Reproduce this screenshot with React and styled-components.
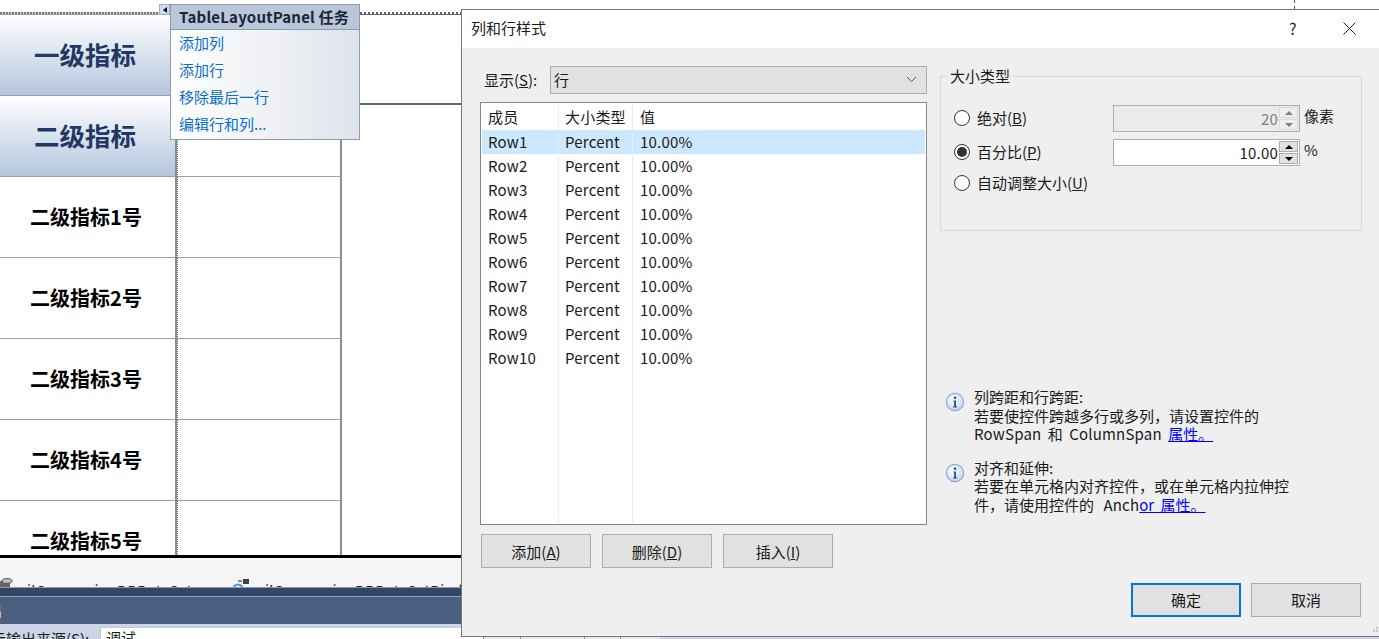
import React from "react";
import styled, { createGlobalStyle } from "styled-components";

const FONT = '"Noto Sans CJK SC", "Noto Sans", sans-serif';

const GlobalStyle = createGlobalStyle`
  html, body {
    margin: 0;
    width: 1379px;
    height: 639px;
    overflow: hidden;
    background: #fff;
  }
  * { box-sizing: border-box; }
`;

const Page = styled.div`
  position: relative;
  width: 1379px;
  height: 639px;
  overflow: hidden;
  font-family: ${FONT};
  font-size: 15px;
  color: #1a1a1a;
`;

/* ---------- designer surface behind the dialog ---------- */

const Designer = styled.div`
  height: 555px;
  display: flex;
  overflow: hidden;
`;

const MainTable = styled.div`
  width: 342px;
  flex: none;
  padding-top: 12px;
`;

const DottedEdge = styled.div`
  height: 2px;
  background: repeating-linear-gradient(90deg, #777 0 2px, #ddd 2px 3px);
`;

const TableGrid = styled.div`
  display: grid;
  grid-template-columns: 177px 165px;
  grid-auto-rows: 81px;
  border-top: 1px solid #a0a0a0;
`;

const LabelCell = styled.div`
  display: flex;
  align-items: center;
  justify-content: center;
  padding: 0 ${(p) => (p.$head ? "5px 3px 0" : "3px 1px 0")};
  border-right: 2px solid #8c8c8c;
  border-bottom: 1px solid #a0a0a0;
  font-weight: 700;
  color: ${(p) => (p.$head ? "#1f3864" : "#000")};
  font-size: ${(p) => (p.$head ? "25.5px" : "20px")};
  background: ${(p) =>
    p.$head ? "linear-gradient(180deg, #ffffff 0%, #b4c6de 100%)" : "#fff"};
`;

const BlankCell = styled.div`
  border-left: 1px dotted #666;
  border-right: 2px solid #8c8c8c;
  border-bottom: 1px solid #a0a0a0;
`;

const SideColumn = styled.div`
  flex: 1;
  padding-top: 12px;
`;

const SideEdge = styled.div`
  height: 2px;
  background: repeating-linear-gradient(90deg, #fff 0 2px, #666 2px 4px);
`;

const SideCell = styled.div`
  height: 91px;
  border-top: 1px solid #666;
  border-bottom: 2px solid #666;
`;

const FrameTick = styled.div`
  position: absolute;
  left: 1294px;
  top: 0;
  height: 9px;
  border-left: 1px dashed #555;
`;

const BlackRule = styled.div`
  height: 3px;
  background: #000;
`;

const Tray = styled.div`
  height: 29px;
  background: #f5f5f5;
  display: flex;
  overflow: hidden;
  padding-top: 23px;
`;

const TrayItem = styled.div`
  display: flex;
  align-items: flex-start;
  width: ${(p) => p.$width}px;
  flex: none;
  line-height: 20px;
  white-space: nowrap;
  color: #222;
  svg {
    flex: none;
    margin-top: -3px;
    margin-right: ${(p) => p.$gap}px;
  }
`;

const DockStripe = styled.div`
  height: 9px;
  background: #344666;
  border-top: 1px solid #8c9ab0;
`;

const DockTitle = styled.div`
  height: 28px;
  background: #4d5f80;
  border-top: 1px solid #8fa0c0;
  color: #fff;
  line-height: 26px;
  overflow: hidden;
  span {
    margin-left: -28px;
    display: inline-block;
  }
`;

const OutputBar = styled.div`
  height: 15px;
  background: #ccd5e6;
  padding-top: 3px;
  display: flex;
  overflow: hidden;
`;

const OutputLabel = styled.div`
  width: 100px;
  flex: none;
  white-space: nowrap;
  line-height: 20px;
  margin-top: 2px;
  span {
    margin-left: -24px;
    display: inline-block;
  }
`;

const OutputInput = styled.div`
  width: 383px;
  flex: none;
  background: #fff;
  border-top: 1px solid #c0cadc;
  border-left: 1px solid #c0cadc;
  padding-left: 5px;
  line-height: 20px;
`;

const ToolButton = styled.div`
  width: ${(p) => p.$width}px;
  flex: none;
  border-left: 1px solid #8a8a8a;
  background: #e6e9f0;
`;

/* ---------- smart tag popup ---------- */

const TagGlyph = styled.div`
  position: absolute;
  left: 159px;
  top: 4px;
  width: 11px;
  height: 11px;
  background: #cfdae8;
  border: 1px solid #9fb0c4;
  display: flex;
  align-items: center;
  justify-content: center;
  &::before {
    content: "";
    border-style: solid;
    border-width: 3.5px 4px 3.5px 0;
    border-color: transparent #111 transparent transparent;
  }
`;

const TagPanel = styled.div`
  position: absolute;
  left: 170px;
  top: 4px;
  width: 190px;
  height: 136px;
  border: 1px solid #8f9bad;
  background: linear-gradient(90deg, #ffffff 0%, #dfe3ea 100%);
`;

const TagHeader = styled.div`
  height: 25px;
  padding-left: 8px;
  background: #b9c7da;
  border-bottom: 1px solid #8f9bad;
  font-weight: 700;
  line-height: 24px;
  letter-spacing: 0.2px;
  color: #1b2536;
  white-space: nowrap;
`;

const TagLink = styled.div`
  height: 26.9px;
  padding-left: 8px;
  line-height: 25px;
  color: #0a6ed1;
`;

/* ---------- dialog ---------- */

const Dialog = styled.div`
  position: absolute;
  left: 461px;
  top: 9px;
  width: 940px;
  height: 628px;
  background: #efefef;
  border: 1px solid #777;
  display: flex;
  flex-direction: column;
`;

const TitleBar = styled.div`
  height: 38px;
  flex: none;
  background: #fff;
  display: flex;
  align-items: center;
  padding: 0 0 2px 9px;
  line-height: 20px;
`;

const TitleText = styled.div`
  width: 818px;
  flex: none;
`;

const HelpMark = styled.div`
  width: 54px;
  flex: none;
  font-size: 16px;
  color: #222;
`;

const DialogBody = styled.div`
  flex: 1;
  display: flex;
  padding: 18px 0 0 18px;
`;

const LeftPane = styled.div`
  width: 447px;
  flex: none;
  display: flex;
  flex-direction: column;
`;

const RightPane = styled.div`
  width: 422px;
  flex: none;
  margin-left: 13px;
  display: flex;
  flex-direction: column;
`;

const ShowRow = styled.div`
  display: flex;
  align-items: center;
  height: 28px;
  padding-left: 4px;
`;

const ShowLabel = styled.div`
  width: 66px;
  flex: none;
  padding-bottom: 2px;
`;

const Combo = styled.div`
  flex: 1;
  height: 28px;
  background: #e1e1e1;
  border: 1px solid #adadad;
  display: flex;
  align-items: center;
  justify-content: space-between;
  padding: 0 9px 2px 3px;
`;

const ListBox = styled.div`
  height: 423px;
  margin-top: 8px;
  background: #fff;
  border: 1px solid #828790;
  padding: 1px;
  display: flex;
  flex-direction: column;
`;

const ListRow = styled.div`
  display: grid;
  grid-template-columns: 77px 74px 1fr;
  height: ${(p) => (p.$header ? "26px" : "24px")};
  flex: ${(p) => (p.$filler ? "1" : "none")};
  background: ${(p) => (p.$selected ? "#cce8ff" : "transparent")};
  line-height: ${(p) => (p.$header ? "26px" : "24px")};
`;

const ListCell = styled.div`
  padding-left: ${(p) => (p.$last ? "7px" : "6px")};
  border-right: ${(p) => (p.$last ? "none" : "1px solid #e3eefa")};
  letter-spacing: 0.2px;
`;

const ButtonRow = styled.div`
  display: flex;
  gap: 11px;
  margin: 9px 0 0 1px;
`;

const PushButton = styled.div`
  width: 110px;
  height: 34px;
  background: #e1e1e1;
  border: ${(p) => (p.$primary ? "2px solid #0078d7" : "1px solid #adadad")};
  display: flex;
  align-items: center;
  justify-content: center;
`;

const GroupBox = styled.fieldset`
  margin: 0;
  height: 165px;
  padding: 19px 0 0 13px;
  border: 1px solid #d9d9d9;
  min-inline-size: 0;
`;

const GroupLegend = styled.legend`
  margin-left: -7px;
  padding: 0 3px;
  line-height: 20px;
`;

const SizeGrid = styled.div`
  display: grid;
  grid-template-columns: 159px 187px 1fr;
  grid-template-rows: 34px 31px 30px;
  align-items: start;
`;

const RadioLabel = styled.div`
  display: flex;
  align-items: center;
  height: 25px;
  white-space: nowrap;
`;

const RadioDot = styled.span`
  width: 16px;
  height: 16px;
  flex: none;
  margin-right: 7px;
  border-radius: 50%;
  border: 1px solid #333;
  background: #fff;
  display: flex;
  align-items: center;
  justify-content: center;
  &::after {
    content: "";
    display: ${(p) => (p.$on ? "block" : "none")};
    width: 10px;
    height: 10px;
    border-radius: 50%;
    background: #333;
  }
`;

const Spinner = styled.div`
  height: 27px;
  border: 1px solid #adadad;
  background: ${(p) => (p.$disabled ? "#ebebeb" : "#fff")};
  color: ${(p) => (p.$disabled ? "#808080" : "#1a1a1a")};
  display: flex;
  justify-content: flex-end;
  align-items: center;
  padding-right: 1px;
`;

const SpinValue = styled.span`
  padding: 0 1px 1px 0;
  letter-spacing: 0.2px;
`;

const SpinArrows = styled.div`
  width: 19px;
  height: 23px;
  display: flex;
  flex-direction: column;
  gap: 1px;
`;

const SpinArrow = styled.div`
  flex: 1;
  display: flex;
  align-items: center;
  justify-content: center;
  background: ${(p) => (p.$disabled ? "#efefef" : "#e1e1e1")};
  border: 1px solid ${(p) => (p.$disabled ? "#d9d9d9" : "#adadad")};
  &::before {
    content: "";
    border-style: solid;
    border-color: transparent;
    border-width: ${(p) => (p.$up ? "0 4px 4px" : "4px 4px 0")};
    border-bottom-color: ${(p) =>
      p.$up ? (p.$disabled ? "#808080" : "#000") : "transparent"};
    border-top-color: ${(p) =>
      p.$up ? "transparent" : p.$disabled ? "#808080" : "#000"};
  }
`;

const UnitText = styled.div`
  padding-left: 4px;
  line-height: 22px;
`;

const InfoList = styled.div`
  margin-top: 157px;
  display: flex;
  flex-direction: column;
  gap: 15px;
`;

const InfoItem = styled.div`
  display: flex;
  padding-left: 5px;
  svg {
    flex: none;
    margin: 4px 9px 0 0;
  }
`;

const InfoText = styled.div`
  line-height: 18.6px;
  white-space: nowrap;
  word-spacing: 3px;
  a {
    color: #0000ff;
    text-decoration: underline;
  }
`;

const Latin = styled.span`
  letter-spacing: 0.2px;
  margin-left: ${(p) => (p.$lead ? "3px" : "0")};
`;

const DialogActions = styled.div`
  margin-top: 68px;
  display: flex;
  justify-content: flex-end;
  gap: 10px;
  padding-right: 1px;
`;

const SizeGrip = styled.div`
  position: absolute;
  left: 1373px;
  top: 630px;
  width: 2px;
  height: 2px;
  background: #c4c4c4;
  box-shadow: 3px 0 0 #c4c4c4, 3px -3px 0 #c4c4c4;
`;

const InfoIcon = () => (
  <svg width="20" height="20" viewBox="0 0 20 20">
    <defs>
      <radialGradient id="infoFill" cx="40%" cy="35%" r="70%">
        <stop offset="0%" stopColor="#ffffff" />
        <stop offset="100%" stopColor="#c3d4ee" />
      </radialGradient>
    </defs>
    <circle cx="10" cy="10" r="8.6" fill="url(#infoFill)" stroke="#8fa9d4" strokeWidth="1.2" />
    <circle cx="10" cy="5.7" r="1.3" fill="#1d4f9e" />
    <path d="M8.3 8.4h2.7v6h1.1v1H8.1v-1h1.1V9.4H8.3z" fill="#1d4f9e" />
  </svg>
);

const CHEVRON = (
  <svg width="11" height="7" viewBox="0 0 11 7" fill="none">
    <path d="M1 1l4.5 4.5L10 1" stroke="#555" strokeWidth="1" />
  </svg>
);

const CLOSE = (
  <svg width="13" height="13" viewBox="0 0 13 13" fill="none">
    <path d="M.5.5l12 12M12.5.5l-12 12" stroke="#222" strokeWidth="1" />
  </svg>
);

const DATA_ICON = (
  <svg width="27" height="12" viewBox="0 0 27 12">
    <rect x="0" y="3" width="10" height="9" fill="#666" />
    <ellipse cx="7" cy="3" rx="5" ry="2.4" fill="#bbb" stroke="#555" />
  </svg>
);

const BINDING_ICON = (
  <svg width="18" height="12" viewBox="0 0 18 12" fill="none">
    <rect x="11" y="1" width="6" height="5" fill="#444" />
    <path d="M6 3h4" stroke="#666" strokeWidth="1.5" />
    <circle cx="6" cy="11" r="4.5" stroke="#3f9be0" strokeWidth="2" />
  </svg>
);

const METRICS = ["二级指标1号", "二级指标2号", "二级指标3号", "二级指标4号", "二级指标5号"];
const ROWS = Array.from({ length: 10 }, (_, i) => `Row${i + 1}`);

const App = () => (
  <Page>
    <GlobalStyle />
    <Designer>
      <MainTable>
        <DottedEdge />
        <TableGrid>
          <LabelCell $head>一级指标</LabelCell>
          <BlankCell />
          <LabelCell $head>二级指标</LabelCell>
          <BlankCell />
          {METRICS.map((name) => (
            <React.Fragment key={name}>
              <LabelCell>{name}</LabelCell>
              <BlankCell />
            </React.Fragment>
          ))}
        </TableGrid>
      </MainTable>
      <SideColumn>
        <SideEdge />
        <SideCell />
      </SideColumn>
    </Designer>
    <BlackRule />
    <Tray>
      <TrayItem $width={232} $gap={0}>
        {DATA_ICON}
        ilCompanionDBDataSet
      </TrayItem>
      <TrayItem $width={240} $gap={15}>
        {BINDING_ICON}
        ilCompanionDBDataSetBindingSource
      </TrayItem>
    </Tray>
    <DockStripe />
    <DockTitle>
      <span>输出</span>
    </DockTitle>
    <OutputBar>
      <OutputLabel>
        <span>显示输出来源(S):</span>
      </OutputLabel>
      <OutputInput>调试</OutputInput>
      <ToolButton $width={37} />
      <ToolButton $width={64} />
      <ToolButton $width={36} />
      <ToolButton $width={40} />
    </OutputBar>

    <FrameTick />
    <TagGlyph />
    <TagPanel>
      <TagHeader>TableLayoutPanel 任务</TagHeader>
      <TagLink>添加列</TagLink>
      <TagLink>添加行</TagLink>
      <TagLink>移除最后一行</TagLink>
      <TagLink>编辑行和列...</TagLink>
    </TagPanel>

    <Dialog>
      <TitleBar>
        <TitleText>列和行样式</TitleText>
        <HelpMark>?</HelpMark>
        {CLOSE}
      </TitleBar>
      <DialogBody>
        <LeftPane>
          <ShowRow>
            <ShowLabel>
              显示(<u>S</u>):
            </ShowLabel>
            <Combo>
              行{CHEVRON}
            </Combo>
          </ShowRow>
          <ListBox>
            <ListRow $header>
              <ListCell>成员</ListCell>
              <ListCell>大小类型</ListCell>
              <ListCell $last>值</ListCell>
            </ListRow>
            {ROWS.map((row, i) => (
              <ListRow key={row} $selected={i === 0}>
                <ListCell>{row}</ListCell>
                <ListCell>Percent</ListCell>
                <ListCell $last>10.00%</ListCell>
              </ListRow>
            ))}
            <ListRow $filler>
              <ListCell />
              <ListCell />
              <ListCell $last />
            </ListRow>
          </ListBox>
          <ButtonRow>
            <PushButton>
              <span>
                添加(<u>A</u>)
              </span>
            </PushButton>
            <PushButton>
              <span>
                删除(<u>D</u>)
              </span>
            </PushButton>
            <PushButton>
              <span>
                插入(<u>I</u>)
              </span>
            </PushButton>
          </ButtonRow>
        </LeftPane>
        <RightPane>
          <GroupBox>
            <GroupLegend>大小类型</GroupLegend>
            <SizeGrid>
              <RadioLabel>
                <RadioDot />
                <span>
                  绝对(<u>B</u>)
                </span>
              </RadioLabel>
              <Spinner $disabled>
                <SpinValue>20</SpinValue>
                <SpinArrows>
                  <SpinArrow $up $disabled />
                  <SpinArrow $disabled />
                </SpinArrows>
              </Spinner>
              <UnitText>像素</UnitText>
              <RadioLabel>
                <RadioDot $on />
                <span>
                  百分比(<u>P</u>)
                </span>
              </RadioLabel>
              <Spinner>
                <SpinValue>10.00</SpinValue>
                <SpinArrows>
                  <SpinArrow $up />
                  <SpinArrow />
                </SpinArrows>
              </Spinner>
              <UnitText>%</UnitText>
              <RadioLabel>
                <RadioDot />
                <span>
                  自动调整大小(<u>U</u>)
                </span>
              </RadioLabel>
            </SizeGrid>
          </GroupBox>
          <InfoList>
            <InfoItem>
              <InfoIcon />
              <InfoText>
                列跨距和行跨距:
                <br />
                若要使控件跨越多行或多列，请设置控件的
                <br />
                <Latin>RowSpan</Latin> 和 <Latin>ColumnSpan</Latin> <a>属性。</a>
              </InfoText>
            </InfoItem>
            <InfoItem>
              <InfoIcon />
              <InfoText>
                对齐和延伸:
                <br />
                若要在单元格内对齐控件，或在单元格内拉伸控
                <br />
                件，请使用控件的 <Latin $lead>Anch</Latin>
                <a>or 属性。</a>
              </InfoText>
            </InfoItem>
          </InfoList>
          <DialogActions>
            <PushButton $primary>确定</PushButton>
            <PushButton>取消</PushButton>
          </DialogActions>
        </RightPane>
      </DialogBody>
    </Dialog>
    <SizeGrip />
  </Page>
);

export default App;
